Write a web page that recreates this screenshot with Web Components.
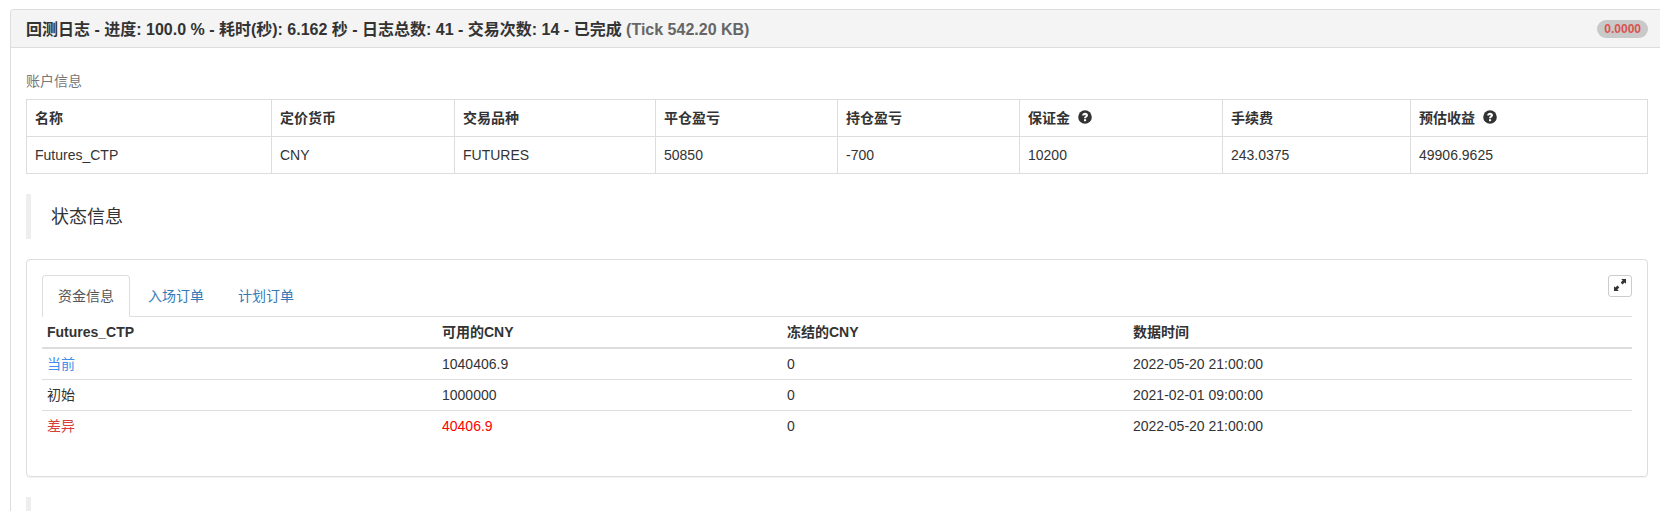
<!DOCTYPE html>
<html lang="zh-CN">
<head>
<meta charset="utf-8">
<meta name="viewport" content="width=device-width, initial-scale=1">
<title>回测日志</title>
<style>
  html { height: 100%; }
  body {
    margin: 0;
    height: 100%;
    overflow: hidden;
    background: #fff;
    color: #333;
    font: 14px/20px "Liberation Sans", "Noto Sans CJK SC", sans-serif;
  }
</style>
</head>
<body>
<log-panel>
  <span slot="title">回测日志 - 进度: 100.0 % - 耗时(秒): 6.162 秒 - 日志总数: 41 - 交易次数: 14 - 已完成</span>
  <span slot="note">(Tick 542.20 KB)</span>
  <count-badge slot="badge">0.0000</count-badge>
  <account-table></account-table>
  <section-heading>状态信息</section-heading>
  <status-card>
    <fund-table></fund-table>
  </status-card>
  <section-heading></section-heading>
</log-panel>

<script>
function define(name, markup) {
  const template = document.createElement('template');
  template.innerHTML = markup;
  customElements.define(name, class extends HTMLElement {
    constructor() {
      super();
      this.attachShadow({ mode: 'open' }).append(template.content.cloneNode(true));
    }
  });
}

define('help-icon', `
  <style>
    :host { display: inline-block; width: 14px; height: 14px; margin-left: 8px; vertical-align: -1px; }
    svg { display: block; }
  </style>
  <svg width="14" height="14" viewBox="0 0 14 14" role="img" aria-label="帮助">
    <circle cx="7" cy="7" r="6.8" fill="#333"/>
    <path d="M4.2 5.5C4.2 3.6 5.5 2.7 7.1 2.7S10 3.7 10 5.2C10 6.9 8.1 7 8.1 8.3H6C6 6.4 7.7 6.3 7.7 5.4C7.7 4.9 7.3 4.7 7 4.7C6.6 4.7 6.4 5 6.4 5.5Z" fill="#fff"/>
    <rect x="6" y="9.2" width="2.1" height="2" fill="#fff"/>
  </svg>`);

define('count-badge', `
  <style>
    :host {
      display: block; padding: 3px 7px; border-radius: 10px;
      background: #c9c9c9; color: #d9534f;
      font-size: 12px; line-height: 12px; font-weight: 700; white-space: nowrap;
    }
  </style>
  <slot></slot>`);

define('log-panel', `
  <style>
    :host {
      display: block; margin: 9px 0 0 10px;
      border: 1px solid #ddd; border-right: 0; border-top-left-radius: 4px;
    }
    header {
      display: flex; justify-content: space-between; align-items: flex-start;
      padding: 10px 12px 7px 15px;
      background: #f4f4f4; border-bottom: 1px solid #ddd; border-top-left-radius: 3px;
    }
    h3 { margin: 0; font-size: 16px; line-height: 20px; font-weight: 700; }
    small { color: #666; font-size: 16px; }
    .body { padding: 15px 12px 15px 15px; }
  </style>
  <header>
    <h3><slot name="title"></slot> <small><slot name="note"></slot></small></h3>
    <slot name="badge"></slot>
  </header>
  <div class="body"><slot></slot></div>`);

define('account-table', `
  <style>
    :host { display: block; margin-bottom: 20px; }
    table { width: 100%; table-layout: fixed; border-collapse: collapse; }
    caption { padding: 8px 0; color: #777; text-align: left; }
    th, td { padding: 8px; border: 1px solid #ddd; text-align: left; }
  </style>
  <table>
    <caption>账户信息</caption>
    <colgroup>
      <col style="width:245px"><col style="width:183px"><col style="width:201px"><col style="width:182px">
      <col style="width:182px"><col style="width:203px"><col style="width:188px"><col style="width:237px">
    </colgroup>
    <thead><tr>
      <th scope="col">名称</th><th scope="col">定价货币</th><th scope="col">交易品种</th><th scope="col">平仓盈亏</th>
      <th scope="col">持仓盈亏</th><th scope="col">保证金<help-icon></help-icon></th><th scope="col">手续费</th><th scope="col">预估收益<help-icon></help-icon></th>
    </tr></thead>
    <tbody><tr>
      <td>Futures_CTP</td><td>CNY</td><td>FUTURES</td><td>50850</td>
      <td>-700</td><td>10200</td><td>243.0375</td><td>49906.9625</td>
    </tr></tbody>
  </table>`);

define('section-heading', `
  <style>
    :host { display: block; margin-bottom: 20px; padding: 11px 20px 9px; border-left: 5px solid #eee; }
    h4 { margin: 0; min-height: 25px; font-size: 18px; line-height: 25px; font-weight: 400; }
  </style>
  <h4><slot></slot></h4>`);

define('status-card', `
  <style>
    :host {
      display: block; margin-bottom: 20px; padding: 15px;
      border: 1px solid #ddd; border-radius: 4px; box-shadow: 0 1px 1px rgba(0,0,0,.05);
    }
    .bar { display: flex; justify-content: space-between; align-items: flex-start; border-bottom: 1px solid #ddd; }
    nav { display: flex; gap: 2px; margin-bottom: -1px; }
    a {
      padding: 10px 15px; border: 1px solid transparent; border-radius: 4px 4px 0 0;
      color: #337ab7; text-decoration: none;
    }
    a[aria-current] { color: #555; background: #fff; border-color: #ddd #ddd #fff; }
    button {
      display: flex; padding: 3px 5px 5px; border: 1px solid #ccc; border-radius: 3px;
      background: #fff; color: #333;
    }
  </style>
  <div class="bar">
    <nav>
      <a href="#funds" aria-current="page">资金信息</a>
      <a href="#entry">入场订单</a>
      <a href="#plan">计划订单</a>
    </nav>
    <button type="button" aria-label="全屏">
      <svg width="12" height="12" viewBox="0 0 12 12" fill="currentColor" aria-hidden="true">
        <path d="M7.2 0H12V4.8L10.6 3.4L8.5 5.4L6.7 3.6L8.7 1.5Z"/>
        <path d="M0 7.2L1.4 8.6L3.5 6.6L5.3 8.4L3.3 10.5L4.8 12H0Z"/>
      </svg>
    </button>
  </div>
  <slot></slot>`);

define('fund-table', `
  <style>
    :host { display: block; margin-bottom: 20px; }
    table { width: 100%; table-layout: fixed; border-collapse: separate; border-spacing: 0; }
    th, td { padding: 5px; text-align: left; }
    tbody th { font-weight: 400; }
    thead th { border-bottom: 2px solid #ddd; }
    tbody tr + tr > * { border-top: 1px solid #ddd; }
    .now { color: #3f8ee8; }
    .diff { color: #d43f3a; }
    .gain { color: #f00; }
  </style>
  <table>
    <colgroup><col style="width:395px"><col style="width:345px"><col style="width:346px"><col style="width:504px"></colgroup>
    <thead><tr>
      <th scope="col">Futures_CTP</th><th scope="col">可用的CNY</th><th scope="col">冻结的CNY</th><th scope="col">数据时间</th>
    </tr></thead>
    <tbody>
      <tr><th scope="row" class="now">当前</th><td>1040406.9</td><td>0</td><td>2022-05-20 21:00:00</td></tr>
      <tr><th scope="row">初始</th><td>1000000</td><td>0</td><td>2021-02-01 09:00:00</td></tr>
      <tr><th scope="row" class="diff">差异</th><td class="gain">40406.9</td><td>0</td><td>2022-05-20 21:00:00</td></tr>
    </tbody>
  </table>`);
</script>
</body>
</html>
